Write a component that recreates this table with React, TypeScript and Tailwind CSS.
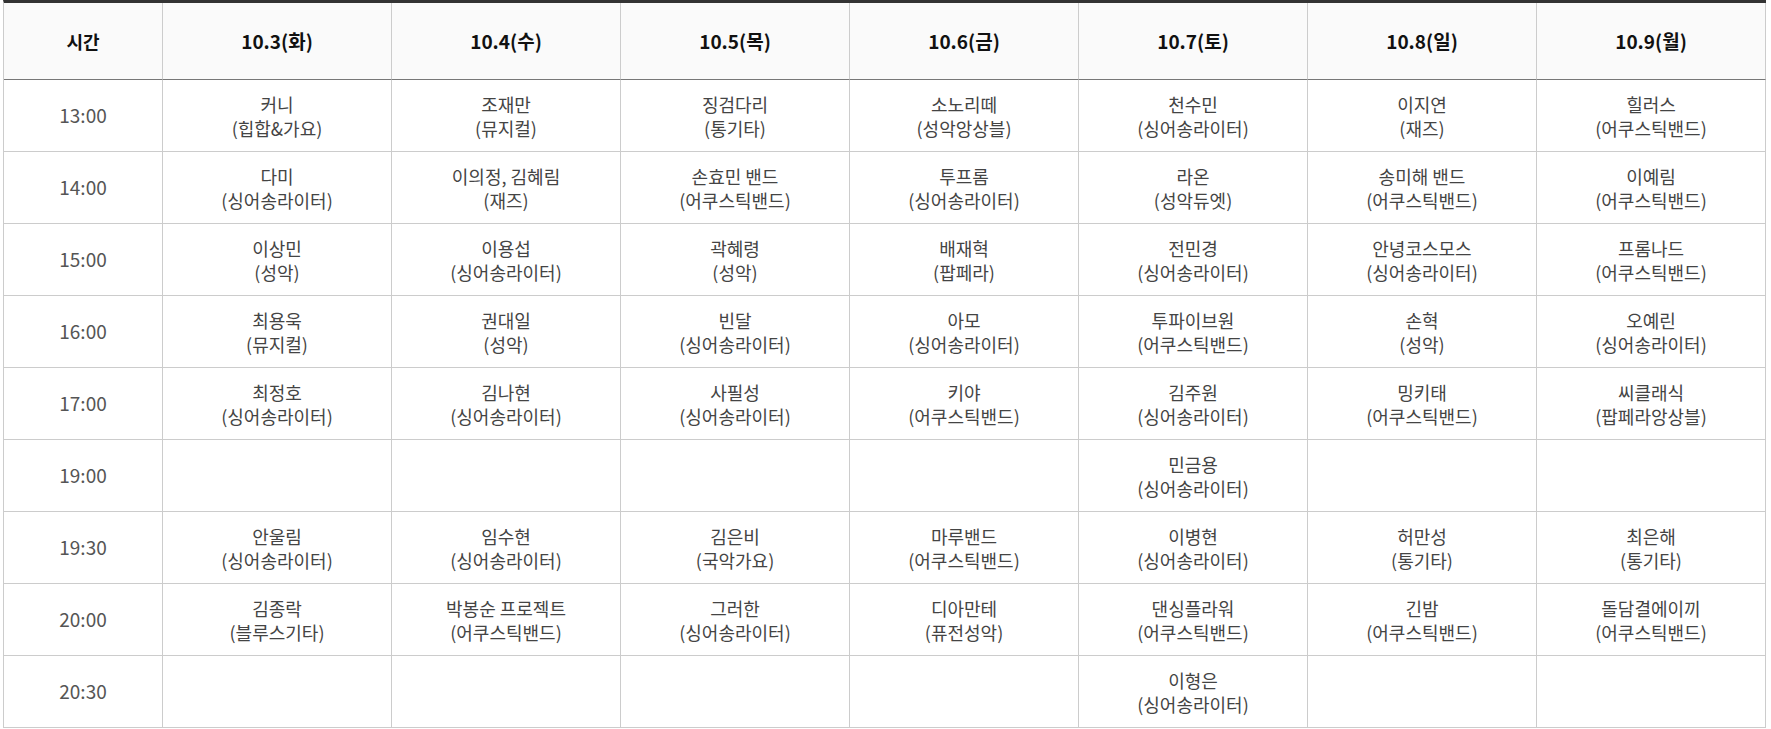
import React from 'react';

type Slot = [string, string] | null;

const days = ['10.3(화)', '10.4(수)', '10.5(목)', '10.6(금)', '10.7(토)', '10.8(일)', '10.9(월)'];

const rows: { time: string; slots: Slot[] }[] = [
  {
    time: '13:00',
    slots: [
      ['커니', '힙합&가요'],
      ['조재만', '뮤지컬'],
      ['징검다리', '통기타'],
      ['소노리떼', '성악앙상블'],
      ['천수민', '싱어송라이터'],
      ['이지연', '재즈'],
      ['힐러스', '어쿠스틱밴드'],
    ],
  },
  {
    time: '14:00',
    slots: [
      ['다미', '싱어송라이터'],
      ['이의정, 김혜림', '재즈'],
      ['손효민 밴드', '어쿠스틱밴드'],
      ['투프롬', '싱어송라이터'],
      ['라온', '성악듀엣'],
      ['송미해 밴드', '어쿠스틱밴드'],
      ['이예림', '어쿠스틱밴드'],
    ],
  },
  {
    time: '15:00',
    slots: [
      ['이상민', '성악'],
      ['이용섭', '싱어송라이터'],
      ['곽혜령', '성악'],
      ['배재혁', '팝페라'],
      ['전민경', '싱어송라이터'],
      ['안녕코스모스', '싱어송라이터'],
      ['프롬나드', '어쿠스틱밴드'],
    ],
  },
  {
    time: '16:00',
    slots: [
      ['최용욱', '뮤지컬'],
      ['권대일', '성악'],
      ['빈달', '싱어송라이터'],
      ['아모', '싱어송라이터'],
      ['투파이브원', '어쿠스틱밴드'],
      ['손혁', '성악'],
      ['오예린', '싱어송라이터'],
    ],
  },
  {
    time: '17:00',
    slots: [
      ['최정호', '싱어송라이터'],
      ['김나현', '싱어송라이터'],
      ['사필성', '싱어송라이터'],
      ['키야', '어쿠스틱밴드'],
      ['김주원', '싱어송라이터'],
      ['밍키태', '어쿠스틱밴드'],
      ['씨클래식', '팝페라앙상블'],
    ],
  },
  {
    time: '19:00',
    slots: [null, null, null, null, ['민금용', '싱어송라이터'], null, null],
  },
  {
    time: '19:30',
    slots: [
      ['안울림', '싱어송라이터'],
      ['임수현', '싱어송라이터'],
      ['김은비', '국악가요'],
      ['마루밴드', '어쿠스틱밴드'],
      ['이병현', '싱어송라이터'],
      ['허만성', '통기타'],
      ['최은해', '통기타'],
    ],
  },
  {
    time: '20:00',
    slots: [
      ['김종락', '블루스기타'],
      ['박봉순 프로젝트', '어쿠스틱밴드'],
      ['그러한', '싱어송라이터'],
      ['디아만테', '퓨전성악'],
      ['댄싱플라워', '어쿠스틱밴드'],
      ['긴밤', '어쿠스틱밴드'],
      ['돌담결에이끼', '어쿠스틱밴드'],
    ],
  },
  {
    time: '20:30',
    slots: [null, null, null, null, ['이형은', '싱어송라이터'], null, null],
  },
];

export default function App() {
  return (
    <div
      className="min-h-screen bg-white"
      style={{ fontFamily: '"Noto Sans CJK KR", "Noto Sans", sans-serif' }}
    >
      <div className="ml-[3px] w-[1763px] border-t-[3px] border-t-[#333] border-l border-l-[#ccc] grid grid-cols-[159px_repeat(7,1fr)]">
        {/* Header */}
        <div className="h-[77px] flex items-center justify-center bg-[#fafafa] border-r border-r-[#ccc] border-b border-b-[#777] text-[18px] font-bold text-[#111]">
          시간
        </div>
        {days.map((d) => (
          <div
            key={d}
            className="h-[77px] flex items-center justify-center bg-[#fafafa] border-r border-r-[#ccc] border-b border-b-[#777] text-[19px] font-bold text-[#111]"
          >
            {d}
          </div>
        ))}

        {/* Body */}
        {rows.map((row) => (
          <React.Fragment key={row.time}>
            <div className="h-[72px] flex items-center justify-center border-r border-b border-[#ccc] text-[19px] text-[#555]">
              {row.time}
            </div>
            {row.slots.map((s, i) => (
              <div
                key={i}
                className="h-[72px] flex flex-col items-center justify-center border-r border-b border-[#ccc] text-[18px] leading-[24px] text-[#444]"
              >
                {s && (
                  <>
                    <span>{s[0]}</span>
                    <span>({s[1]})</span>
                  </>
                )}
              </div>
            ))}
          </React.Fragment>
        ))}
      </div>
    </div>
  );
}
